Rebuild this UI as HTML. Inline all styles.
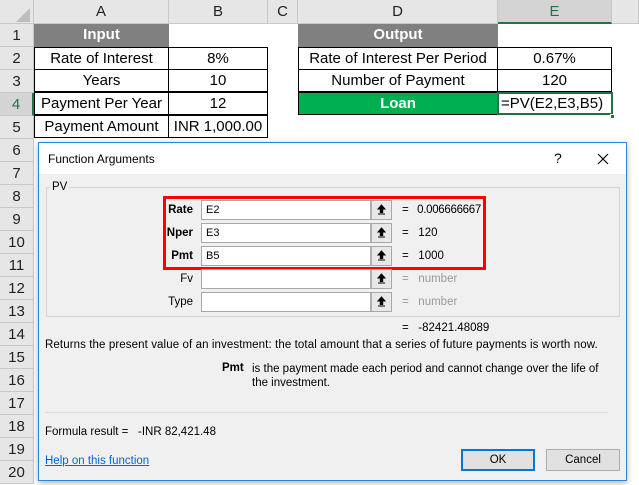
<!DOCTYPE html><html><head><style>
*{margin:0;padding:0;box-sizing:border-box}
body{width:639px;height:485px;overflow:hidden;background:#fff;font-family:"Liberation Sans",sans-serif;position:relative}
.a{position:absolute}
.hd{background:#e6e6e6;color:#222;font-size:15px;text-align:center;border-right:1px solid #c8c8c8;border-bottom:1px solid #c8c8c8}
.rn{background:#e6e6e6;color:#222;font-size:15px;text-align:center;border-bottom:1px solid #c8c8c8;border-right:1px solid #c8c8c8;width:34px;height:23px;line-height:23px;left:0}
.c{font-size:15px;text-align:center;line-height:22px;height:23px;color:#000}
.bx{border:1px solid #000}
.d{font-size:11.5px;color:#000}
.in{background:#fff;border:1px solid #a8a8a8;height:20px;width:191px;left:201px;font-size:11px;padding:3px 4px}
.bt{position:absolute;right:0;top:0;width:21px;height:18px;background:#e8e8e8;border-left:2px solid #b0b0b0}
.bt svg{position:absolute;left:5px;top:3px}
.lb{font-size:11.5px;text-align:right;width:60px;left:133px}
</style></head><body>
<div class="a hd" style="left:0;top:0;width:34px;height:24px;background:#e6e6e6"></div>
<svg class="a" style="left:16px;top:8px" width="14" height="14"><polygon points="14,0 14,14 0,14" fill="#bdbdbd"/></svg>
<div class="a hd" style="left:34px;top:0;width:135px;height:24px;line-height:24px">A</div>
<div class="a hd" style="left:169px;top:0;width:99px;height:24px;line-height:24px">B</div>
<div class="a hd" style="left:268px;top:0;width:30px;height:24px;line-height:24px">C</div>
<div class="a hd" style="left:298px;top:0;width:200px;height:24px;line-height:24px">D</div>
<div class="a hd" style="left:498px;top:0;width:114px;height:24px;line-height:24px;background:#d4d4d4;color:#217346;border-bottom:2px solid #217346">E</div>
<div class="a hd" style="left:612px;top:0;width:27px;height:24px"></div>
<div class="a rn" style="top:24px">1</div><div class="a rn" style="top:47px">2</div><div class="a rn" style="top:70px">3</div>
<div class="a rn" style="top:93px;background:#d4d4d4;color:#217346;border-right:2px solid #217346">4</div>
<div class="a rn" style="top:116px">5</div><div class="a rn" style="top:139px">6</div><div class="a rn" style="top:162px">7</div>
<div class="a rn" style="top:185px">8</div><div class="a rn" style="top:208px">9</div><div class="a rn" style="top:231px">10</div>
<div class="a rn" style="top:254px">11</div><div class="a rn" style="top:277px">12</div><div class="a rn" style="top:300px">13</div>
<div class="a rn" style="top:323px">14</div><div class="a rn" style="top:346px">15</div><div class="a rn" style="top:369px">16</div>
<div class="a rn" style="top:392px">17</div><div class="a rn" style="top:415px">18</div><div class="a rn" style="top:438px">19</div>
<div class="a rn" style="top:461px">20</div>
<div class="a c" style="left:34px;top:24px;width:135px;background:#808080;color:#fff;font-weight:bold">Input</div>
<div class="a c bx" style="left:34px;top:47px;width:135px">Rate of Interest</div>
<div class="a c bx" style="left:168px;top:47px;width:100px">8%</div>
<div class="a c bx" style="left:34px;top:69px;width:135px">Years</div>
<div class="a c bx" style="left:168px;top:69px;width:100px">10</div>
<div class="a c bx" style="left:34px;top:92px;width:135px">Payment Per Year</div>
<div class="a c bx" style="left:168px;top:92px;width:100px">12</div>
<div class="a c bx" style="left:34px;top:115px;width:135px">Payment Amount</div>
<div class="a c bx" style="left:168px;top:115px;width:100px">INR 1,000.00</div>
<div class="a c" style="left:298px;top:24px;width:200px;background:#808080;color:#fff;font-weight:bold">Output</div>
<div class="a c bx" style="left:298px;top:47px;width:200px">Rate of Interest Per Period</div>
<div class="a c bx" style="left:497px;top:47px;width:115px">0.67%</div>
<div class="a c bx" style="left:298px;top:69px;width:200px">Number of Payment</div>
<div class="a c bx" style="left:497px;top:69px;width:115px">120</div>
<div class="a c bx" style="left:298px;top:92px;width:200px;background:#00b050;color:#fff;font-weight:bold">Loan</div>
<div class="a c" style="left:497px;top:92px;width:116px;border:2px solid #217346;text-align:left;padding-left:2px;line-height:20px;white-space:nowrap">=PV(E2,E3,B5)</div>
<div class="a" style="left:610px;top:114px;width:5px;height:5px;background:#217346;border:1px solid #fff"></div>

<div class="a" style="left:38px;top:142px;width:589px;height:339px;background:#f0f0f0;border:1px solid #2b87d8;box-shadow:0 2px 6px rgba(0,0,0,.3)">
 <div class="a" style="left:0;top:0;width:587px;height:31px;background:#fff"></div>
 <div class="a" style="left:9px;top:9px;font-size:12px;color:#000">Function Arguments</div>
 <div class="a" style="left:515px;top:7px;font-size:14px">?</div>
 <svg class="a" style="left:558px;top:10px" width="12" height="12"><path d="M1 1L11 11M11 1L1 11" stroke="#000" stroke-width="1.2"/></svg>
 <div class="a" style="left:7px;top:44px;width:574px;height:130px;border:1px solid #d5d5d5"></div>
 <div class="a d" style="left:11px;top:38px;background:#f0f0f0;padding:0 2px">PV</div>
 <div class="a" style="left:124px;top:53px;width:323px;height:74px;border:3px solid #f00"></div>
</div>
<div class="a lb" style="top:204px;font-weight:bold">Rate</div>
<div class="a in" style="top:200px">E2<div class="bt"><svg width="9" height="11"><path d="M4.5 1L1 5h2.3v3.5h2.4V5H8z M1 10h7" fill="#000" stroke="#000" stroke-width="1"/></svg></div></div>
<div class="a d" style="left:402px;top:204px;letter-spacing:-0.3px">=&nbsp;&nbsp;&nbsp;0.006666667</div>
<div class="a lb" style="top:227px;font-weight:bold">Nper</div>
<div class="a in" style="top:223px">E3<div class="bt"><svg width="9" height="11"><path d="M4.5 1L1 5h2.3v3.5h2.4V5H8z M1 10h7" fill="#000" stroke="#000" stroke-width="1"/></svg></div></div>
<div class="a d" style="left:402px;top:227px">=&nbsp;&nbsp;&nbsp;120</div>
<div class="a lb" style="top:250px;font-weight:bold">Pmt</div>
<div class="a in" style="top:246px">B5<div class="bt"><svg width="9" height="11"><path d="M4.5 1L1 5h2.3v3.5h2.4V5H8z M1 10h7" fill="#000" stroke="#000" stroke-width="1"/></svg></div></div>
<div class="a d" style="left:402px;top:250px">=&nbsp;&nbsp;&nbsp;1000</div>
<div class="a lb" style="top:273px">Fv</div>
<div class="a in" style="top:269px"><div class="bt"><svg width="9" height="11"><path d="M4.5 1L1 5h2.3v3.5h2.4V5H8z M1 10h7" fill="#000" stroke="#000" stroke-width="1"/></svg></div></div>
<div class="a d" style="left:402px;top:273px;color:#999">=&nbsp;&nbsp;&nbsp;<span>number</span></div>
<div class="a lb" style="top:296px">Type</div>
<div class="a in" style="top:292px"><div class="bt"><svg width="9" height="11"><path d="M4.5 1L1 5h2.3v3.5h2.4V5H8z M1 10h7" fill="#000" stroke="#000" stroke-width="1"/></svg></div></div>
<div class="a d" style="left:402px;top:296px;color:#999">=&nbsp;&nbsp;&nbsp;number</div>
<div class="a d" style="left:402px;top:322px">=&nbsp;&nbsp;&nbsp;-82421.48089</div>
<div class="a d" style="left:45px;top:339px;white-space:nowrap;letter-spacing:0.1px">Returns the present value of an investment: the total amount that a series of future payments is worth now.</div>
<div class="a d" style="left:222px;top:362px;font-weight:bold">Pmt</div>
<div class="a d" style="left:252px;top:362px;width:362px;line-height:14px">is the payment made each period and cannot change over the life of the investment.</div>
<div class="a" style="left:45px;top:412px;width:563px;height:1px;background:#dcdcdc"></div>
<div class="a d" style="left:45px;top:426px">Formula result =&nbsp;&nbsp;&nbsp;-INR 82,421.48</div>
<div class="a d" style="left:45px;top:455px;color:#0066cc;text-decoration:underline">Help on this function</div>
<div class="a d" style="left:461px;top:449px;width:74px;height:22px;border:2px solid #0078d7;background:#e1e1e1;text-align:center;line-height:18px">OK</div>
<div class="a d" style="left:546px;top:449px;width:74px;height:22px;border:1px solid #adadad;background:#e1e1e1;text-align:center;line-height:20px">Cancel</div>
</body></html>
